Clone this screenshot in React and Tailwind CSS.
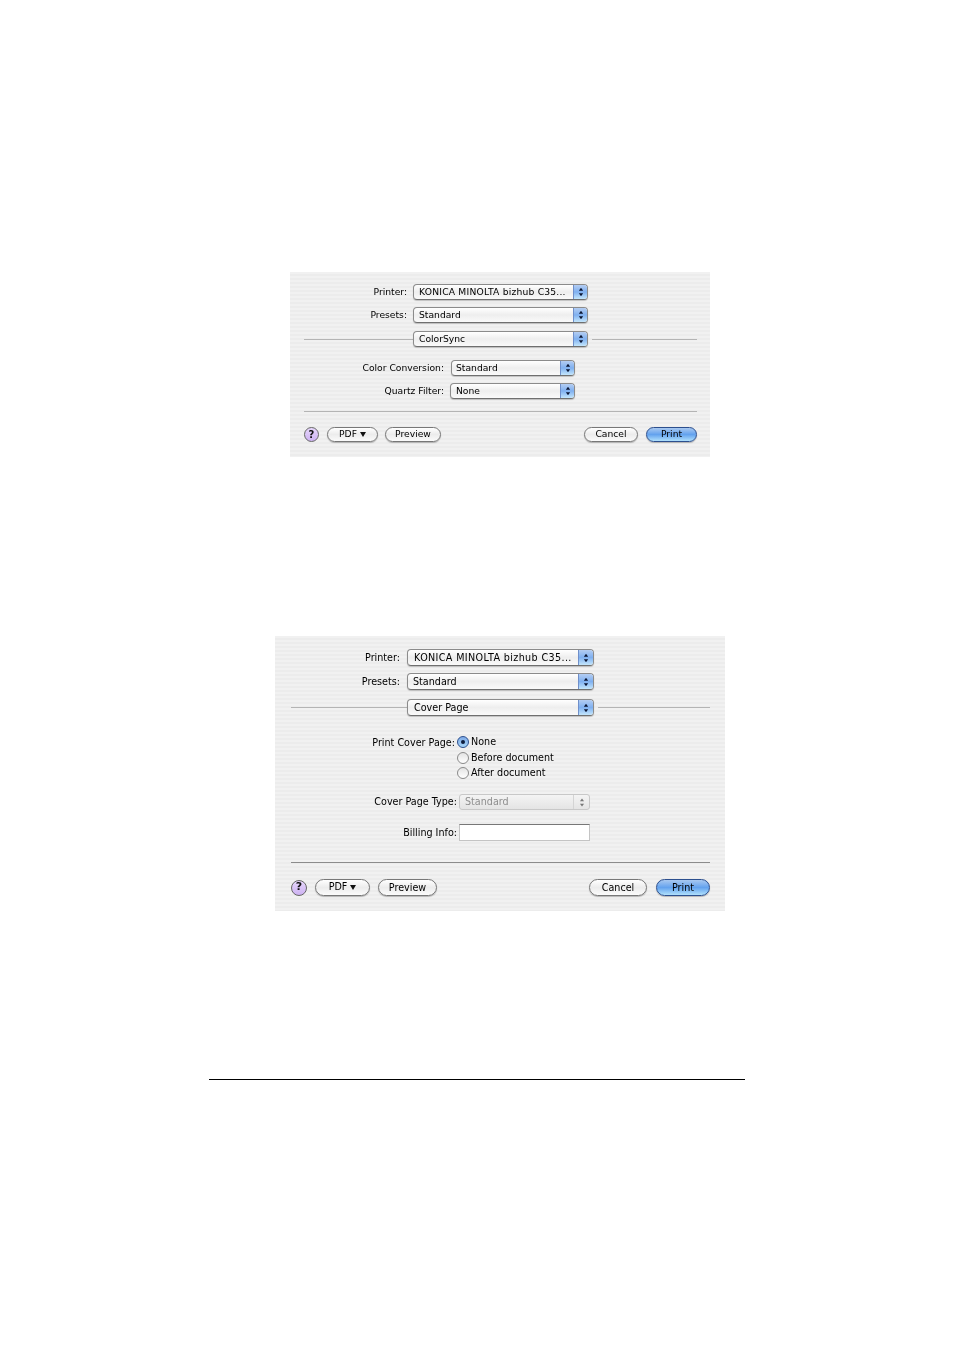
const stripes = "bg-[repeating-linear-gradient(180deg,#f1f1f1_0px,#f1f1f1_2px,#ececec_2px,#ececec_4px)]";

function Arrows({ className }) {
  return (
    <svg viewBox="0 0 7 11" className={className}>
      <path d="M3.5 0.5 L6 4 H1 Z" fill="currentColor" />
      <path d="M3.5 10.5 L6 7 H1 Z" fill="currentColor" />
    </svg>
  );
}

function Select({ text, className, tip = "w-[14px]", disabled, textClass = "pl-[5px]" }) {
  if (disabled) {
    return (
      <div className={`flex items-stretch rounded-[3px] border border-[#c8c8c8] bg-gradient-to-b from-[#f4f4f4] to-[#e4e4e4] text-[#8e8e8e] ${className}`}>
        <span className={`flex-1 flex items-center ${textClass}`}>{text}</span>
        <span className="w-[16px] flex items-center justify-center border-l border-[#d4d4d4]">
          <Arrows className="w-[6px] h-[9px] text-[#777]" />
        </span>
      </div>
    );
  }
  return (
    <div className={`flex items-stretch rounded-[4px] border border-[#8b8b8b] border-b-[#6f6f6f] bg-gradient-to-b from-[#ffffff] via-[#eeeeee] to-[#fafafa] text-black shadow-[0_1px_1px_rgba(0,0,0,0.2)] overflow-hidden ${className}`}>
      <span className={`flex-1 flex items-center whitespace-nowrap ${textClass}`}>{text}</span>
      <span className={`${tip} flex items-center justify-center border-l border-[#6f8fca] bg-gradient-to-b from-[#b4cdf2] via-[#7fb0f0] to-[#c4e6fb]`}>
        <Arrows className="w-[6px] h-[10px] text-[#0a1533]" />
      </span>
    </div>
  );
}

function Pill({ children, className, primary }) {
  const look = primary
    ? "border-[#2c4f8e] bg-gradient-to-b from-[#a8c8f0] via-[#63a2ee] to-[#b0e0fb] text-black"
    : "border-[#777] bg-gradient-to-b from-[#ffffff] via-[#ececec] to-[#fbfbfb] text-black";
  return (
    <div className={`flex items-center justify-center rounded-full border shadow-[0_1px_1px_rgba(0,0,0,0.25)] ${look} ${className}`}>
      {children}
    </div>
  );
}

function PdfLabel() {
  return (
    <span className="flex items-center gap-[3px]">
      PDF
      <svg viewBox="0 0 6 5" className="w-[6px] h-[5px]">
        <path d="M0 0 H6 L3 5 Z" fill="#111" />
      </svg>
    </span>
  );
}

function Help({ className }) {
  return (
    <div className={`flex items-center justify-center rounded-full border border-[#666] bg-gradient-to-b from-[#e6d6fb] to-[#cdb2f2] font-bold text-[#111] ${className}`}>
      ?
    </div>
  );
}

function Radio({ checked }) {
  return (
    <span className={`w-[12px] h-[12px] rounded-full border flex items-center justify-center shrink-0 ${checked ? "border-[#2c4f8e] bg-gradient-to-b from-[#7ea9e6] to-[#a8d6f8]" : "border-[#8a8a8a] bg-gradient-to-b from-[#e4e4e4] to-[#ffffff]"}`}>
      {checked && <span className="w-[4px] h-[4px] rounded-full bg-[#0c1c3c]" />}
    </span>
  );
}

function ColorSyncPanel() {
  return (
    <div className={`ml-[290px] w-[420px] h-[185px] pt-[12px] text-[9.2px] text-black blur-[0.3px] ${stripes}`}>
      <div className="flex items-center h-[16px]">
        <span className="w-[117px] text-right">Printer:</span>
        <Select text={<span className="tracking-[0.2px]">KONICA MINOLTA bizhub C35...</span>} className="ml-[6px] w-[175px] h-[16px]" />
      </div>
      <div className="flex items-center h-[16px] mt-[7px]">
        <span className="w-[117px] text-right">Presets:</span>
        <Select text="Standard" className="ml-[6px] w-[175px] h-[16px]" />
      </div>
      <div className="flex items-center h-[16px] mt-[8px] pl-[14px] pr-[13px]">
        <div className="h-px w-[109px] bg-[#b4b4b4]" />
        <Select text="ColorSync" className="w-[175px] h-[16px]" />
        <div className="h-px ml-[4px] flex-1 bg-[#b4b4b4]" />
      </div>
      <div className="flex items-center h-[16px] mt-[13px]">
        <span className="w-[154px] text-right">Color Conversion:</span>
        <Select text="Standard" className="ml-[7px] w-[124px] h-[16px]" textClass="pl-[4px]" />
      </div>
      <div className="flex items-center h-[16px] mt-[7px]">
        <span className="w-[154px] text-right">Quartz Filter:</span>
        <Select text="None" className="ml-[6px] w-[125px] h-[16px]" />
      </div>
      <div className="h-px ml-[14px] mr-[13px] mt-[12px] bg-[#b4b4b4]" />
      <div className="flex items-center h-[16px] mt-[14px] pl-[14px] pr-[13px]">
        <Help className="w-[15px] h-[15px] text-[10px]" />
        <Pill className="ml-[8px] w-[51px] h-[15px]"><PdfLabel /></Pill>
        <Pill className="ml-[7px] w-[56px] h-[15px]">Preview</Pill>
        <Pill className="ml-auto w-[54px] h-[15px]">Cancel</Pill>
        <Pill primary className="ml-[8px] w-[51px] h-[15px]">Print</Pill>
      </div>
    </div>
  );
}

function CoverPagePanel() {
  return (
    <div className={`ml-[275px] w-[450px] h-[275px] mt-[179px] pt-[13px] text-[9.6px] text-black blur-[0.3px] ${stripes}`}>
      <div className="flex items-center h-[17px]">
        <span className="w-[125px] pt-[1px] text-right">Printer:</span>
        <Select text={<span className="tracking-[0.37px] pt-[1px]">KONICA MINOLTA bizhub C35...</span>} className="ml-[7px] w-[187px] h-[17px]" tip="w-[15px]" textClass="pl-[6px]" />
      </div>
      <div className="flex items-center h-[17px] mt-[7px]">
        <span className="w-[125px] pt-[2px] text-right">Presets:</span>
        <Select text="Standard" className="ml-[7px] w-[187px] h-[17px]" tip="w-[15px]" textClass="pl-[5px] pt-[1px]" />
      </div>
      <div className="flex items-center h-[17px] mt-[9px] pl-[16px] pr-[15px]">
        <div className="h-px w-[116px] bg-[#b4b4b4]" />
        <Select text="Cover Page" className="w-[187px] h-[17px]" tip="w-[15px]" textClass="pl-[6px] pt-[1px]" />
        <div className="h-px ml-[4px] flex-1 bg-[#b4b4b4]" />
      </div>
      <div className="flex mt-[19px]">
        <span className="w-[180px] mt-[1px] text-right leading-[14px]">Print Cover Page:</span>
        <div className="ml-[2px] flex flex-col gap-[1.5px]">
          <div className="flex items-center gap-[2px] h-[14px]"><Radio checked /><span className="pt-[1px]">None</span></div>
          <div className="flex items-center gap-[2px] h-[14px]"><Radio /><span className="pt-[1px]">Before document</span></div>
          <div className="flex items-center gap-[2px] h-[14px]"><Radio /><span className="pt-[1px]">After document</span></div>
        </div>
      </div>
      <div className="flex items-center h-[16px] mt-[14px]">
        <span className="w-[182px] pt-[1px] text-right">Cover Page Type:</span>
        <Select disabled text="Standard" className="ml-[2px] w-[131px] h-[16px]" textClass="pl-[5px] pt-[1px]" />
      </div>
      <div className="flex items-center h-[17px] mt-[14px]">
        <span className="w-[182px] pt-[2px] text-right">Billing Info:</span>
        <div className="ml-[2px] w-[131px] h-[17px] bg-white border border-[#c4c4c4] border-t-[#777]" />
      </div>
      <div className="h-px ml-[16px] mr-[15px] mt-[21px] bg-[#8c8c8c]" />
      <div className="flex items-center h-[17px] mt-[16px] px-[15px]">
        <Help className="ml-[1px] w-[16px] h-[16px] text-[11px]" />
        <Pill className="ml-[8px] w-[55px] h-[17px]"><PdfLabel /></Pill>
        <Pill className="ml-[8px] w-[59px] h-[17px]"><span className="pt-[1px]">Preview</span></Pill>
        <Pill className="ml-auto w-[58px] h-[17px]"><span className="pt-[1px]">Cancel</span></Pill>
        <Pill primary className="ml-[9px] w-[54px] h-[17px]"><span className="pt-[1px]">Print</span></Pill>
      </div>
    </div>
  );
}

export default function App() {
  return (
    <div className="w-[954px] h-[1350px] bg-white pt-[272px] overflow-hidden font-['DejaVu_Sans',sans-serif]">
      <ColorSyncPanel />
      <CoverPagePanel />
      <div className="ml-[209px] w-[536px] h-px mt-[168px] bg-black" />
    </div>
  );
}
